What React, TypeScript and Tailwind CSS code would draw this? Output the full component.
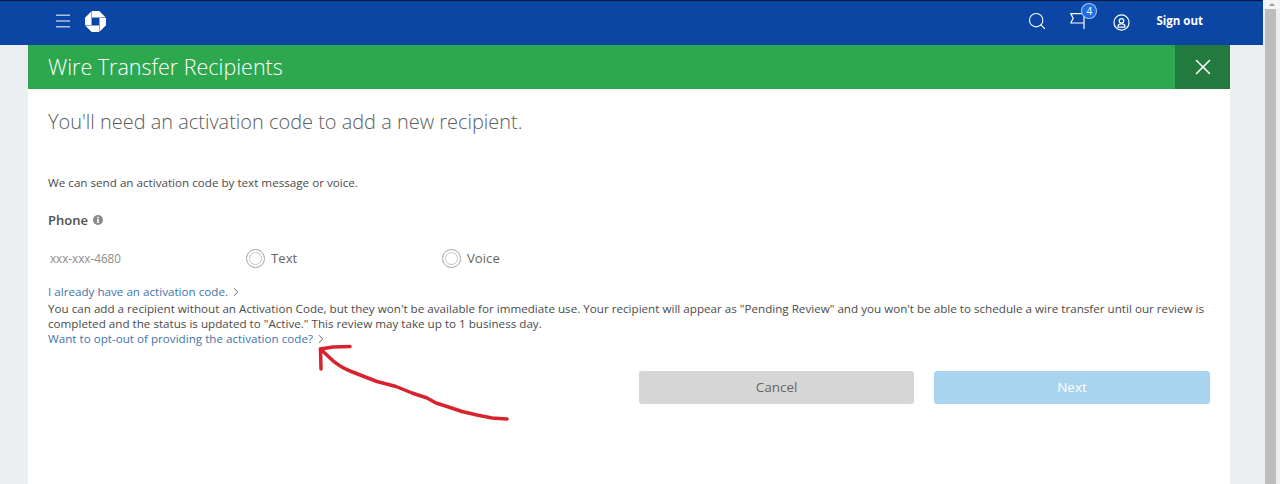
import { Search, Menu, X, ChevronRight } from "lucide-react";

function ChaseLogo() {
  const wedge = "M33 0H68L99 31H33Z";
  return (
    <svg width="21" height="21" viewBox="0 0 100 100" fill="#ffffff">
      <path d={wedge} />
      <path d={wedge} transform="rotate(90 50 50)" />
      <path d={wedge} transform="rotate(180 50 50)" />
      <path d={wedge} transform="rotate(270 50 50)" />
    </svg>
  );
}

function FlagIcon() {
  return (
    <svg width="15" height="16" viewBox="0 0 15 16" fill="none" stroke="#ffffff" strokeWidth="1.2">
      <path d="M14 0.500V16" />
      <path d="M14 10H0.800L3.200 5.200L0.800 0.600H14" strokeLinejoin="round" />
    </svg>
  );
}

function AccountIcon() {
  return (
    <svg width="17" height="17" viewBox="0 0 18 18" fill="none" stroke="#ffffff" strokeWidth="1.3">
      <circle cx="9" cy="9" r="8" />
      <circle cx="9" cy="7.200" r="2.400" />
      <path d="M5.400 14V12.600C5.400 11 6.500 10.400 9 10.400C11.500 10.400 12.600 11 12.600 12.600V14Z" />
    </svg>
  );
}

function InfoDot() {
  return (
    <svg width="10" height="10" viewBox="0 0 10 10">
      <circle cx="5" cy="5" r="5" fill="#8a8a8a" />
      <rect x="4.200" y="1.800" width="1.600" height="1.500" fill="#ffffff" />
      <rect x="4.200" y="4" width="1.600" height="4" fill="#ffffff" />
    </svg>
  );
}

function Radio({ label, className }: { label: string; className: string }) {
  return (
    <label className={`flex items-center gap-[6px] ${className}`}>
      <span className="mb-[2px] flex h-[19px] w-[19px] items-center justify-center rounded-full border border-[#a3a3a3]">
        <span className="h-[13px] w-[13px] rounded-full border border-[#c4c4c4]" />
      </span>
      <span className="text-[13.200px] text-[#666666]">{label}</span>
    </label>
  );
}

function TextLink({ children }: { children: string }) {
  return (
    <a className="flex items-center gap-[1px] text-[#3f73ab]">
      {children}
      <ChevronRight size={14} strokeWidth={1.6} className="text-[#4f5f70]" />
    </a>
  );
}

export default function App() {
  return (
    <div className="relative flex h-[484px] w-[1280px] overflow-hidden bg-[#eceff2] font-['Open_Sans',sans-serif]">
      <div className="flex w-[1263px] flex-col">
        <header className="flex h-[45px] shrink-0 items-center border-t border-[#0a1c3c] bg-[#0b46a4] pb-[4px] text-white">
          <Menu size={20} strokeWidth={1.2} className="ml-[53px]" />
          <span className="ml-[12px] flex">
            <ChaseLogo />
          </span>
          <div className="ml-auto flex items-center">
            <Search size={20} strokeWidth={1.3} />
            <div className="relative ml-[23px] flex">
              <FlagIcon />
              <span className="absolute -right-[12px] -top-[10px] flex h-[16px] w-[16px] items-center justify-center rounded-full border border-white/60 bg-[#1f6fe0] text-[10px]">
                4
              </span>
            </div>
            <span className="ml-[28px] mt-[2px] flex">
              <AccountIcon />
            </span>
            <span className="ml-[26px] mr-[60px] text-[11.500px] font-bold">Sign out</span>
          </div>
        </header>

        <main className="ml-[28px] mr-[33px] flex flex-1 flex-col bg-white">
          <div className="flex h-[44px] shrink-0 items-center justify-between bg-[#2ea84f]">
            <h1 className="ml-[20px] text-[21.500px] font-light text-white">Wire Transfer Recipients</h1>
            <button className="flex h-full w-[55px] items-center justify-center bg-[#237a3e] text-white">
              <X size={26} strokeWidth={1.400} />
            </button>
          </div>

          <div className="flex flex-col px-[20px]">
            <h2 className="mt-[18px] text-[19.950px] font-light leading-[30px] text-[#5c5c5c]">
              You'll need an activation code to add a new recipient.
            </h2>
            <p className="mt-[38px] text-[11.650px] leading-[16px] text-[#4a4a4a]">
              We can send an activation code by text message or voice.
            </p>
            <div className="mt-[19px] flex items-center gap-[5px] text-[13px] font-semibold leading-[20px] text-[#4f4f4f]">
              Phone
              <InfoDot />
            </div>
            <div className="mt-[17px] flex h-[24px] items-center">
              <span className="ml-[2px] w-[196px] text-[11.700px] text-[#8c8c8c]">xxx-xxx-4680</span>
              <Radio label="Text" className="w-[196px]" />
              <Radio label="Voice" className="" />
            </div>
            <div className="mt-[13px] text-[11.650px] leading-[15px] text-[#4a4a4a]">
              <TextLink>I already have an activation code.</TextLink>
              <p className="mt-[2px]">
                You can add a recipient without an Activation Code, but they won't be available for immediate use. Your
                recipient will appear as "Pending Review" and you won't be able to schedule a wire transfer until our
                review is completed and the status is updated to "Active." This review may take up to 1 business day.
              </p>
              <TextLink>Want to opt-out of providing the activation code?</TextLink>
            </div>
            <div className="mt-[25px] flex justify-end gap-[20px]">
              <button className="h-[33px] w-[275px] rounded-[3px] bg-[#d6d6d6] text-[13.500px] text-[#666666]">Cancel</button>
              <button className="h-[33px] w-[276px] rounded-[3px] bg-[#a8d4ee] text-[13.500px] text-white">Next</button>
            </div>
          </div>
        </main>
      </div>

      <div className="flex w-[17px] flex-col bg-[#eceff2]">
        <div className="flex h-[9px] items-center justify-center bg-[#f5f5f5]">
          <span className="h-0 w-0 border-x-[3px] border-b-[3px] border-x-transparent border-b-[#9a9a9a]" />
        </div>
        <div className="ml-[2px] mr-[4px] flex-1 bg-[#bdbdbd]" />
      </div>

      <svg
        className="pointer-events-none absolute left-0 top-0"
        width="1280"
        height="484"
        fill="none"
        stroke="#d8232f"
        strokeWidth="3.500"
        strokeLinecap="round"
        strokeLinejoin="round"
      >
        <path d="M350 346.500L333 347L320.500 349L321 369" />
        <path d="M320.500 349C330 358 338 367 350 371L364 376.500L377 381.500L396 386.500L412 393L427 398L436 403L447 406.500L462 411.500L477 415L492 418L507 419" />
      </svg>
    </div>
  );
}
